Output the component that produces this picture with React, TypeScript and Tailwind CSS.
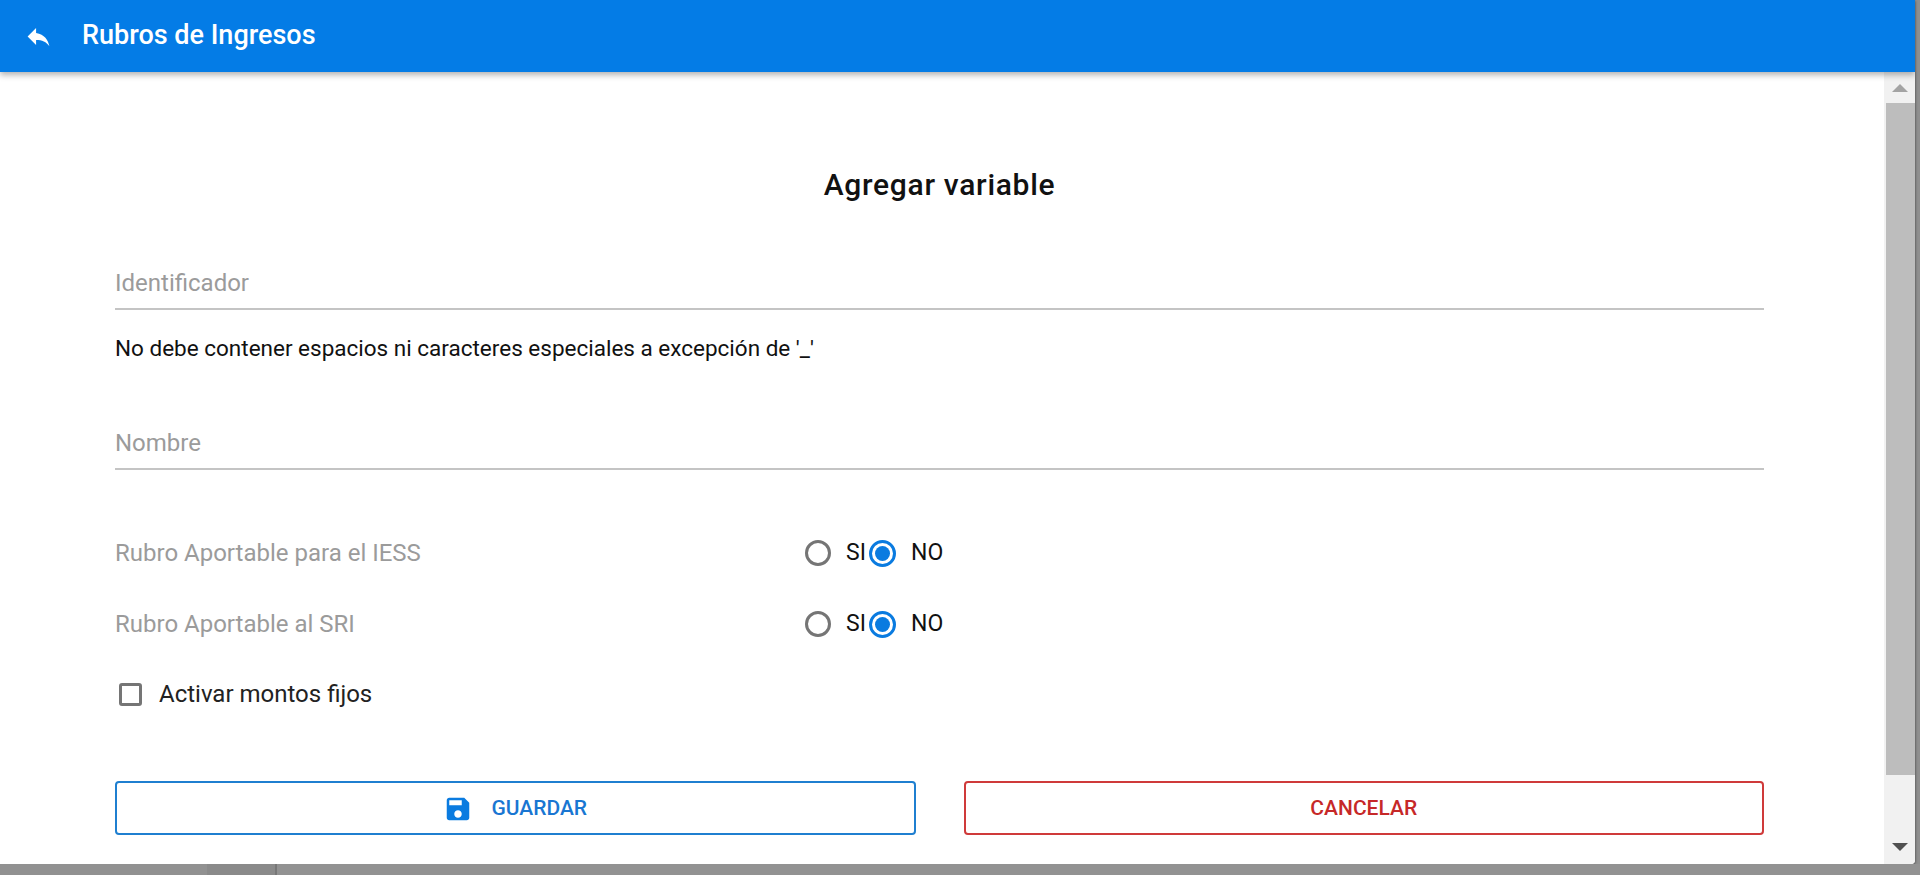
function RadioRow({ label }: { label: string }) {
    return (
        <div className="flex h-[38px] items-center">
            <span className="w-[690px] text-[24px] text-[#9b9b9b]">{label}</span>
            <div className="flex items-center text-[23px] text-[#111]">
                <span className="mr-[15px] h-[26px] w-[26px] rounded-full border-[3px] border-[#757575]" />
                <span className="w-[23px]">SI</span>
                <span className="mr-[15px] flex h-[27px] w-[27px] items-center justify-center rounded-full border-[3px] border-[#0a7be0]">
                    <span className="h-[15px] w-[15px] rounded-full bg-[#0a7be0]" />
                </span>
                <span>NO</span>
            </div>
        </div>
    );
}

export default function App() {
    return (
        <div className="flex h-[875px] w-[1920px] flex-col overflow-hidden bg-[#8f8f8f] font-['Roboto',sans-serif]">
            <div className="mr-[5px] flex h-[864px] shrink-0 flex-col overflow-hidden rounded-br-[4px] bg-white shadow-[0_1px_3px_rgba(0,0,0,0.6)]">
                {/* Header */}
                <div className="z-10 flex h-[72px] shrink-0 items-center bg-[#047ce6] shadow-[0_3px_6px_rgba(0,0,0,0.3)]">
                    <svg viewBox="0 0 24 24" className="ml-[24px] h-[29px] w-[29px] fill-white">
                        <path d="M10 9V5l-7 7 7 7v-4.1c5 0 8.5 1.6 11 5.1-1-5-4-10-11-11z" />
                    </svg>
                    <h1 className="ml-[29px] pb-[1px] text-[27px] font-medium text-white">Rubros de Ingresos</h1>
                </div>
                <div className="flex min-h-0 grow">
                    {/* Form */}
                    <div className="min-w-0 grow pl-[115px] pr-[120px]">
                        <h2 className="mt-[91px] text-center text-[30px] leading-[44px] font-medium tracking-[0.7px] text-[#111]">
                            Agregar variable
                        </h2>
                        <div className="mt-[57px] flex h-[46px] items-center border-b-2 border-[#c4c4c4] pb-[7px] text-[24px] text-[#9b9b9b]">
                            Identificador
                        </div>
                        <p className="mt-[23px] text-[22.5px] leading-[30px] text-[#111]">
                            No debe contener espacios ni caracteres especiales a excepción de '_'
                        </p>
                        <div className="mt-[61px] flex h-[46px] items-center border-b-2 border-[#c4c4c4] pb-[7px] text-[24px] text-[#9b9b9b]">
                            Nombre
                        </div>
                        <div className="mt-[64px] flex flex-col gap-[33px]">
                            <RadioRow label="Rubro Aportable para el IESS" />
                            <RadioRow label="Rubro Aportable al SRI" />
                        </div>
                        <label className="mt-[33px] flex items-center text-[24px] text-[#222]">
                            <span className="ml-[4px] mr-[17px] h-[23px] w-[23px] rounded-[3px] border-[3px] border-[#757575]" />
                            Activar montos fijos
                        </label>
                        <div className="mt-[69px] flex gap-[48px]">
                            <button className="flex h-[54px] flex-1 items-center justify-center rounded-[4px] border-2 border-[#1f7fd0] pt-[2px] text-[21px] font-medium text-[#1976d2]">
                                <svg viewBox="0 0 24 24" className="mr-[18px] h-[30px] w-[30px] fill-[#0a7be0]">
                                    <path d="M17 3H5c-1.11 0-2 .9-2 2v14c0 1.1.89 2 2 2h14c1.1 0 2-.9 2-2V7l-4-4zm-5 16c-1.66 0-3-1.34-3-3s1.34-3 3-3 3 1.34 3 3-1.34 3-3 3zm3-10H5V5h10v4z" />
                                </svg>
                                GUARDAR
                            </button>
                            <button className="flex h-[54px] flex-1 items-center justify-center rounded-[4px] border-2 border-[#cf3a3a] pt-[2px] text-[21px] font-medium text-[#c62828]">
                                CANCELAR
                            </button>
                        </div>
                    </div>
                    {/* Scrollbar */}
                    <div className="flex w-[31px] shrink-0 flex-col bg-[#f1f1f1]">
                        <div className="flex h-[31px] items-center justify-center">
                            <span className="h-0 w-0 border-x-[8px] border-b-[8px] border-x-transparent border-b-[#a3a3a3]" />
                        </div>
                        <div className="ml-[2px] h-[672px] bg-[#bdbdbd]" />
                        <div className="flex grow items-end justify-center pb-[13px]">
                            <span className="h-0 w-0 border-x-[8px] border-t-[8px] border-x-transparent border-t-[#505050]" />
                        </div>
                    </div>
                </div>
            </div>
            {/* Dimmed page underneath */}
            <div className="flex grow">
                <div className="w-[207px] bg-[#919191]" />
                <div className="w-[70px] border-r-2 border-[#777] bg-[#8a8a8a]" />
                <div className="grow bg-[#929292]" />
            </div>
        </div>
    );
}
